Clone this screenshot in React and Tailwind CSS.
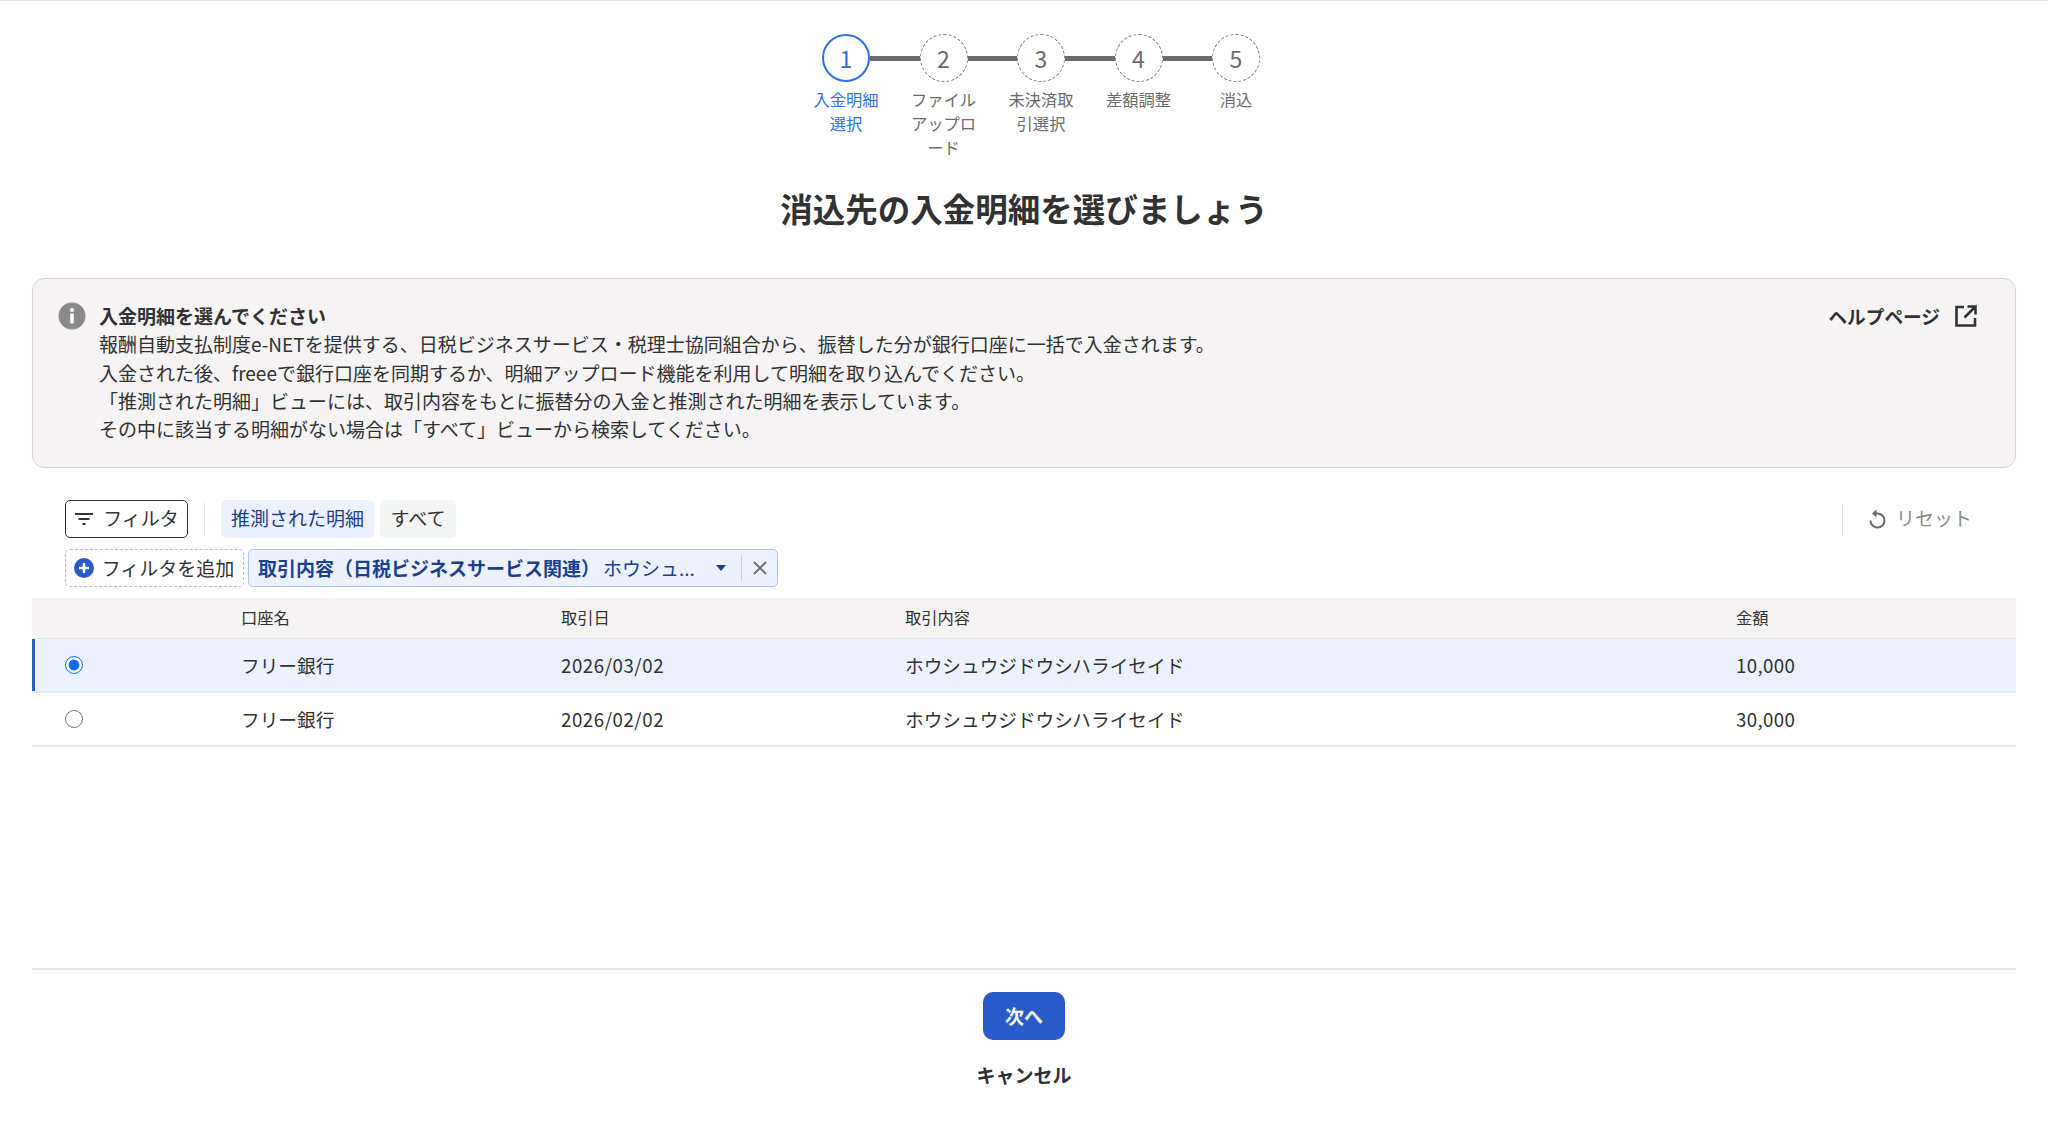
const steps = [
  { n: 1, lines: ['入金明細', '選択'], active: true },
  { n: 2, lines: ['ファイル', 'アップロ', 'ード'] },
  { n: 3, lines: ['未決済取', '引選択'] },
  { n: 4, lines: ['差額調整'] },
  { n: 5, lines: ['消込'] },
]

const rows = [
  { bank: 'フリー銀行', date: '2026/03/02', desc: 'ホウシュウジドウシハライセイド', amount: '10,000', selected: true },
  { bank: 'フリー銀行', date: '2026/02/02', desc: 'ホウシュウジドウシハライセイド', amount: '30,000' },
]

const cols = 'grid grid-cols-[209px_320px_344px_831px_1fr] items-center'

function Stepper() {
  return (
    <div className="flex flex-col items-center pl-[34px]">
      <div className="flex items-center">
        {steps.map((s, i) => (
          <div key={s.n} className="flex items-center">
            {i > 0 && <div className="w-[49.5px] h-[5px] bg-[#6e6a6a]"></div>}
            <div
              className={`w-12 h-12 rounded-full flex items-center justify-center text-[23px] bg-white ${
                s.active ? 'border-2 border-[#2f6fed] text-[#2f6fed]' : 'border-[1.5px] border-dashed border-[#7a7777] text-[#6e6a6a]'
              }`}
            >
              {s.n}
            </div>
          </div>
        ))}
      </div>
      <div className="flex mt-[5px]">
        {steps.map((s) => (
          <div
            key={s.n}
            className={`w-[97.5px] text-center text-[16.3px] leading-6 ${s.active ? 'text-[#2f6fed]' : 'text-[#6e6a6a]'}`}
          >
            {s.lines.map((l) => (
              <div key={l}>{l}</div>
            ))}
          </div>
        ))}
      </div>
    </div>
  )
}

function InfoBox() {
  return (
    <div className="mx-8 mt-[46px] h-[190px] rounded-xl border-[1.5px] border-[#d8d5d5] bg-[#f5f3f4] pt-[23px] pl-[25px] pr-[37px] flex">
      <svg width="28" height="28" viewBox="0 0 28 28" className="shrink-0">
        <circle cx="14" cy="14" r="13.5" fill="#8c8989" />
        <circle cx="14" cy="8" r="2" fill="#fff" />
        <rect x="12.2" y="11.5" width="3.6" height="10" rx="1" fill="#fff" />
      </svg>
      <div className="ml-[13px] flex-1 text-[19px] leading-[28.3px] text-[#323232]">
        <div className="font-bold">入金明細を選んでください</div>
        <div>報酬自動支払制度e-NETを提供する、日税ビジネスサービス・税理士協同組合から、振替した分が銀行口座に一括で入金されます。</div>
        <div>入金された後、freeeで銀行口座を同期するか、明細アップロード機能を利用して明細を取り込んでください。</div>
        <div>「推測された明細」ビューには、取引内容をもとに振替分の入金と推測された明細を表示しています。</div>
        <div>その中に該当する明細がない場合は「すべて」ビューから検索してください。</div>
      </div>
      <div className="flex items-start gap-[14px] text-[18.67px] leading-[28.3px] font-bold text-[#323232]">
        <span>ヘルプページ</span>
        <svg width="24" height="24" viewBox="0 0 24 24" fill="none" stroke="#323232" strokeWidth="2.6" className="mt-[2px]">
          <path d="M10 3H2.5v18.5H21V14" />
          <path d="M13.5 2.5H21.5V10.5M21 3L10.5 13.5" />
        </svg>
      </div>
    </div>
  )
}

function Toolbar() {
  return (
    <div className="mt-[32px] pl-[65px] pr-[45px]">
      <div className="flex items-center h-[38px]">
        <button className="w-[123px] h-[38px] rounded-[5px] border-[1.5px] border-[#323232] flex items-center justify-center gap-[9px] text-[19px] text-[#323232]">
          <svg width="20" height="14" viewBox="0 0 20 14" stroke="#323232" strokeWidth="2">
            <path d="M1 2h18M4.5 7h11M8.5 12h3" />
          </svg>
          <span className="pb-[2px]">フィルタ</span>
        </button>
        <div className="w-px h-[33px] bg-[#dfe3e3] ml-4 mr-4"></div>
        <div className="w-[153px] h-[38px] pb-[2px] rounded-[5px] bg-[#ebf1fd] text-[#1d3f8f] text-[19px] flex items-center justify-center">推測された明細</div>
        <div className="w-[76px] h-[38px] pb-[2px] rounded-[5px] bg-[#f4f6f6] text-[#323232] text-[19px] flex items-center justify-center ml-[6px]">すべて</div>
        <div className="ml-auto flex items-center h-[33px] border-l border-[#dfe3e3] pl-[25px] w-[161px] gap-[10px] text-[19px] text-[#8c8989]">
          <svg width="18" height="20" viewBox="0 0 18 20" fill="none" stroke="#6e6a6a" strokeWidth="2">
            <path d="M5 4.5h4.5a7 7 0 1 1-7 7" />
            <path d="M8.5 0.5L4 4.5l4.5 4" fill="#6e6a6a" stroke="none" />
          </svg>
          <span className="pb-[2px]">リセット</span>
        </div>
      </div>
      <div className="flex items-center mt-[11px] h-[38px] gap-[4px]">
        <button className="w-[179px] h-[38px] rounded-[5px] border-[1.5px] border-dashed border-[#bdbbbb] flex items-center justify-center gap-[8px] text-[19px] text-[#323232]">
          <svg width="20" height="20" viewBox="0 0 20 20" className="-ml-[1px]">
            <circle cx="10" cy="10" r="10" fill="#2a5bc9" />
            <path d="M10 5v10M5 10h10" stroke="#fff" strokeWidth="2.4" />
          </svg>
          <span className="pt-[1px]">フィルタを追加</span>
        </button>
        <div className="w-[530px] h-[38px] rounded-[5px] border-[1.5px] border-[#a9c4f5] bg-[#ebf1fd] flex items-center pl-[9px] text-[19px]">
          <span className="font-bold text-[#1d3f8f] whitespace-nowrap pt-[1px]">取引内容（日税ビジネスサービス関連）</span>
          <span className="ml-[3px] text-[#1d3f8f] whitespace-nowrap pt-[1px]">ホウシュ...</span>
          <svg width="10" height="6" viewBox="0 0 10 6" className="ml-[21px]">
            <path d="M0 0h10L5 6z" fill="#1d3f8f" />
          </svg>
          <div className="w-px h-[26px] bg-[#c9d3e6] ml-[15px]"></div>
          <svg width="14" height="14" viewBox="0 0 14 14" stroke="#6e6a6a" strokeWidth="1.8" className="ml-[11px]">
            <path d="M1 1l12 12M13 1L1 13" />
          </svg>
        </div>
      </div>
    </div>
  )
}

function Table() {
  return (
    <div className="mx-8 mt-[11px] text-[#323232]">
      <div className={`${cols} h-[41px] pb-[2px] bg-[#f5f3f4] border-b border-[#e8e8e8] text-[16.3px]`}>
        <div></div>
        <div>口座名</div>
        <div>取引日</div>
        <div>取引内容</div>
        <div>金額</div>
      </div>
      {rows.map((r) => (
        <div
          key={r.date}
          className={`${cols} h-[54px] border-b-2 border-[#e8eaea] text-[18.67px] ${
            r.selected ? 'bg-[#ebf1fd] shadow-[inset_3px_0_0_#2a5bc9]' : ''
          }`}
        >
          <div className="pl-[33px] flex items-center">
            <input type="radio" name="row" checked={!!r.selected} readOnly className="w-[18px] h-[18px] m-0 -mt-[1px] accent-[#0b6bf2]" />
          </div>
          <div>{r.bank}</div>
          <div className="tracking-[0.03em]">{r.date}</div>
          <div>{r.desc}</div>
          <div className="tracking-[0.02em]">{r.amount}</div>
        </div>
      ))}
    </div>
  )
}

export default function App() {
  return (
    <div
      className="w-full h-[1122px] overflow-hidden bg-white border-t border-[#e5e5e5] pt-[33px]"
      style={{ fontFamily: '"Noto Sans CJK JP", "Liberation Sans", sans-serif' }}
    >
      <Stepper />
      <h1 className="mt-[25px] text-center text-[32.5px] leading-[48px] font-bold text-[#323232]">消込先の入金明細を選びましょう</h1>
      <InfoBox />
      <Toolbar />
      <Table />
      <div className="mx-8 mt-[221px] border-t-2 border-[#e8eaea] flex flex-col items-center">
        <button className="mt-[22px] w-[82px] h-[48px] rounded-[10px] bg-[#2a5bc9] text-white font-bold text-[19px]">次へ</button>
        <div className="mt-[21px] text-[19px] leading-[28px] font-bold text-[#323232]">キャンセル</div>
      </div>
    </div>
  )
}
